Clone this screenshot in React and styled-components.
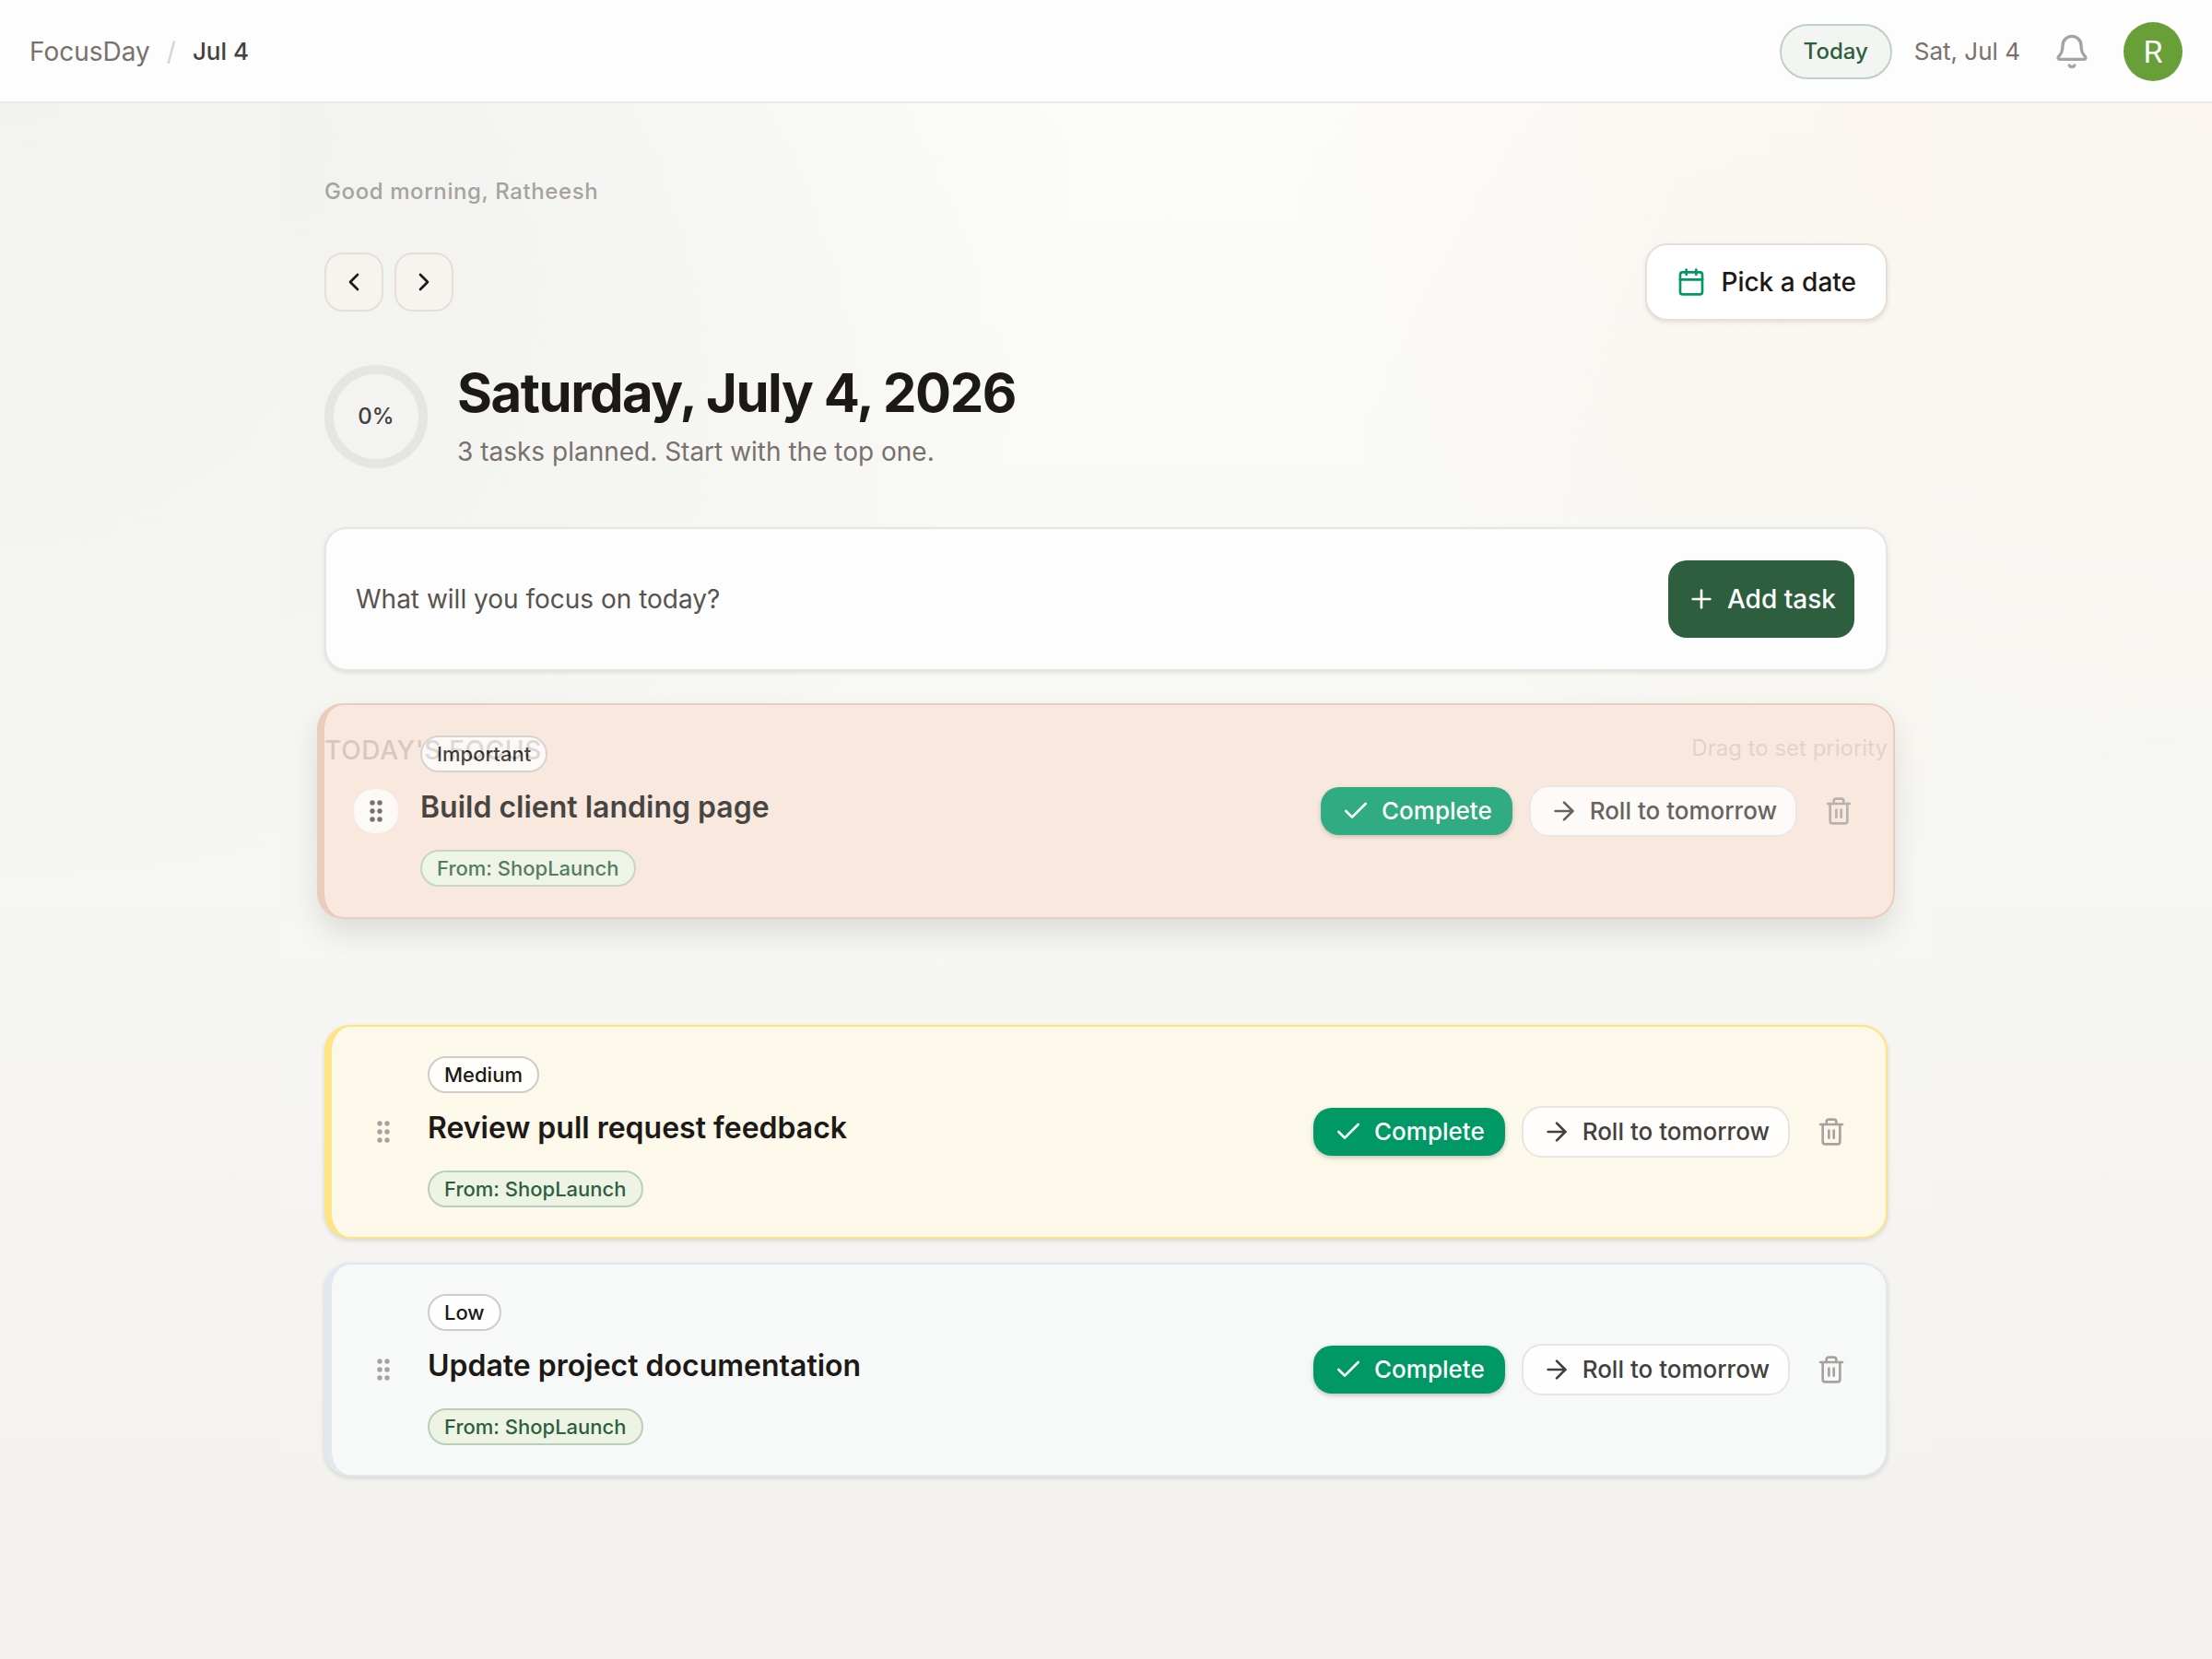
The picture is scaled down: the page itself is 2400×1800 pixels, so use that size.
import React from "react";
import styled, { createGlobalStyle, css } from "styled-components";
import {
  ArrowRight,
  Bell,
  Calendar,
  Check,
  ChevronLeft,
  ChevronRight,
  Plus,
  Trash2,
} from "lucide-react";

const pageBackground = css`
  background:
    radial-gradient(ellipse 50% 55% at 0 0, rgba(45, 75, 63, 0.05), transparent),
    radial-gradient(ellipse 40% 50% at 100% 0, rgba(230, 145, 60, 0.06), transparent),
    linear-gradient(180deg, #fcfcfa 0%, #f7f7f3 45%, #f3f1ed 100%);
`;

const GlobalStyle = createGlobalStyle`
  *, *::before, *::after { box-sizing: border-box; }
  body {
    margin: 0;
    color: #1c1917;
    font-family: Inter, "Liberation Sans", sans-serif;
    font-size: 28px;
    line-height: 40px;
  }
  button, input { font: inherit; color: inherit; }
  h1, h2, h3, p, ul { margin: 0; padding: 0; }
  svg { display: block; flex: none; }
`;

const Page = styled.div`
  display: flex;
  flex-direction: column;
  min-height: 100vh;
  ${pageBackground}
`;

const Header = styled.header`
  display: flex;
  align-items: center;
  justify-content: space-between;
  padding: 24px 32px 22px;
  border-bottom: 2px solid #e9e8e7;
  background: #fdfdfd;
`;

const Breadcrumb = styled.nav`
  display: flex;
  gap: 18px;
  color: #44403c;
  font-weight: 500;
`;

const HomeLink = styled.a`
  color: #78716c;
  font-weight: 400;
  text-decoration: none;
`;

const Slash = styled.span`
  color: #d6d3d1;
  font-weight: 400;
`;

const CurrentDay = styled.span`
  font-size: 26px;
`;

const HeaderTools = styled.div`
  display: flex;
  align-items: center;
  gap: 24px;
`;

const TodayButton = styled.button`
  height: 60px;
  padding: 0 24px;
  border: 2px solid #c0d0c5;
  border-radius: 30px;
  background: #f2f5f2;
  color: #2d5f3f;
  font-size: 24px;
  font-weight: 500;
`;

const HeaderDate = styled.span`
  color: #78716c;
  font-size: 26px;
`;

const BellButton = styled.button`
  padding: 12px;
  border: 0;
  background: none;
  color: #a8a29e;
`;

const Avatar = styled.button`
  width: 64px;
  height: 64px;
  padding: 0;
  border: 0;
  border-radius: 50%;
  background: #689f38;
  color: #fff;
  font-family: Roboto, sans-serif;
  font-size: 34px;
`;

const Main = styled.main`
  flex: 1;
  width: 100%;
  max-width: 1792px;
  margin: 0 auto;
  padding: 80px 48px;
  ${pageBackground}
`;

const Greeting = styled.p`
  color: #a8a29e;
  font-size: 24px;
  font-weight: 500;
  line-height: 32px;
  letter-spacing: 0.025em;
`;

const DayNav = styled.div`
  display: flex;
  align-items: center;
  gap: 12px;
  margin-top: 40px;
`;

const StepButton = styled.button`
  display: grid;
  place-items: center;
  width: 64px;
  height: 64px;
  padding: 0;
  border: 2px solid #e7dfd6;
  border-radius: 20px;
  background: #f7f4f0;
`;

const PickButton = styled.button`
  display: flex;
  align-items: center;
  gap: 16px;
  height: 84px;
  margin-left: auto;
  padding: 0 32px;
  border: 2px solid #e7dfd6;
  border-radius: 24px;
  background: #fff;
  font-weight: 500;
  box-shadow: 0 2px 4px rgba(28, 25, 23, 0.1);

  svg { color: #009966; }
`;

const Hero = styled.section`
  display: flex;
  align-items: center;
  gap: 32px;
  margin-top: 42px;
`;

const Ring = styled.div`
  display: grid;
  place-items: center;
  width: 112px;
  height: 112px;
  border: 10px solid #e7e5e4;
  border-radius: 50%;
  color: #44403c;
  font-size: 24px;
  font-weight: 500;
`;

const HeroText = styled.div`
  display: grid;
  gap: 8px;
  padding-bottom: 4px;
`;

const Title = styled.h1`
  font-size: 58px;
  font-weight: 700;
  line-height: 72px;
  letter-spacing: -0.025em;
`;

const Subtitle = styled.p`
  color: #78716c;
`;

const AddForm = styled.form`
  display: flex;
  align-items: center;
  gap: 24px;
  margin-top: 58px;
  padding: 34px 34px 34px 32px;
  border: 2px solid #e7e5e4;
  border-radius: 24px;
  background: #fdfdfd;
  box-shadow: 0 2px 4px rgba(28, 25, 23, 0.1);
`;

const TaskInput = styled.input`
  flex: 1;
  min-width: 0;
  height: 84px;
  padding: 0;
  border: 0;
  outline: 0;
  background: none;

  &::placeholder { color: #57534e; opacity: 1; }
`;

const AddButton = styled.button`
  display: flex;
  align-items: center;
  gap: 12px;
  height: 84px;
  padding: 0 20px;
  border: 0;
  border-radius: 20px;
  background: #2d5f3f;
  color: #fff;
  font-weight: 500;
`;

const SectionHead = styled.div`
  display: flex;
  align-items: flex-start;
  justify-content: space-between;
  margin-top: 66px;
`;

const SectionTitle = styled.h2`
  color: #57534e;
  font-size: 28px;
  font-weight: 500;
  letter-spacing: 0.025em;
`;

const Hint = styled.p`
  color: #8c857f;
  font-size: 24px;
  line-height: 36px;
`;

const TaskList = styled.ul`
  display: grid;
  gap: 26px;
  margin-top: 20px;
  list-style: none;
`;

const tones = {
  Important: { line: "#e8c3b0", fill: "#fae5da" },
  Medium: { line: "#fde585", fill: "#fcf8ea" },
  Low: { line: "#e2e8f0", fill: "#f7f9f8" },
};

const TaskCard = styled.li`
  display: flex;
  align-items: center;
  gap: 24px;
  padding: 32px;
  border: 2px solid ${(p) => tones[p.$tone].line};
  border-left-width: 8px;
  border-radius: 28px;
  background: ${(p) => tones[p.$tone].fill};
  box-shadow: 0 2px 5px rgba(28, 25, 23, 0.14);

  ${(p) =>
    p.$dragging &&
    css`
      z-index: 1;
      margin: -1px -8px;
      padding: 33px 32px;
      opacity: 0.8;
      transform: translateY(-90px);
      box-shadow: 0 16px 32px -4px rgba(28, 25, 23, 0.16);
    `}
`;

const Handle = styled.button`
  display: grid;
  place-items: center;
  width: 48px;
  height: 48px;
  padding: 0;
  border: 0;
  border-radius: 22px;
  background: ${(p) => (p.$active ? "rgba(255, 255, 255, 0.8)" : "transparent")};
  color: ${(p) => (p.$active ? "#57534e" : "#a8a29e")};
`;

const TaskBody = styled.div`
  flex: 1;
  display: flex;
  flex-direction: column;
  align-items: flex-start;
`;

const Tag = styled.span`
  padding: 0 16px;
  border: 2px solid ${(p) => (p.$source ? "#b9cfbb" : "#cfcccb")};
  border-radius: 20px;
  background: ${(p) => (p.$source ? "#edf4e4" : "rgba(255, 255, 255, 0.8)")};
  color: ${(p) => (p.$source ? "#2d5f3f" : "#1c1917")};
  font-size: 22px;
  font-weight: 500;
  line-height: 36px;
`;

const TaskTitle = styled.h3`
  margin: 14px 0 22px;
  font-size: 32px;
  font-weight: 600;
  line-height: 48px;
`;

const Actions = styled.div`
  display: flex;
  align-items: center;
  gap: 18px;
`;

const ActionButton = styled.button`
  display: flex;
  align-items: center;
  gap: 12px;
  height: 56px;
  padding: 0 20px;
  border: 2px solid #e7e5e4;
  border-radius: 22px;
  background: rgba(255, 255, 255, 0.85);
  color: #44403c;
  font-size: 26px;
  font-weight: 500;

  ${(p) =>
    p.$primary &&
    css`
      height: 52px;
      padding: 0 22px;
      border: 0;
      border-radius: 20px;
      background: #009966;
      color: #fff;
      box-shadow: 0 2px 5px rgba(28, 25, 23, 0.25);
    `}
`;

const DeleteButton = styled.button`
  padding: 11px;
  border: 0;
  background: none;
  color: #a8a29e;
`;

function Grip() {
  return (
    <svg width="16" height="26" viewBox="0 0 16 26" fill="currentColor" aria-hidden="true">
      {[4, 13, 22].map((y) => (
        <React.Fragment key={y}>
          <circle cx="4" cy={y} r="2.7" />
          <circle cx="12" cy={y} r="2.7" />
        </React.Fragment>
      ))}
    </svg>
  );
}

const tasks = [
  { title: "Build client landing page", tone: "Important", dragging: true },
  { title: "Review pull request feedback", tone: "Medium" },
  { title: "Update project documentation", tone: "Low" },
];

function Task({ title, tone, dragging }) {
  return (
    <TaskCard $tone={tone} $dragging={dragging}>
      <Handle type="button" $active={dragging} aria-label={`Move ${title}`}>
        <Grip />
      </Handle>
      <TaskBody>
        <Tag>{tone}</Tag>
        <TaskTitle>{title}</TaskTitle>
        <Tag $source>From: ShopLaunch</Tag>
      </TaskBody>
      <Actions>
        <ActionButton type="button" $primary>
          <Check size={32} />
          Complete
        </ActionButton>
        <ActionButton type="button">
          <ArrowRight size={32} />
          Roll to tomorrow
        </ActionButton>
        <DeleteButton type="button" aria-label={`Delete ${title}`}>
          <Trash2 size={32} />
        </DeleteButton>
      </Actions>
    </TaskCard>
  );
}

export default function App() {
  return (
    <Page>
      <GlobalStyle />
      <Header>
        <Breadcrumb aria-label="Breadcrumb">
          <HomeLink href="#home">FocusDay</HomeLink>
          <Slash>/</Slash>
          <CurrentDay>Jul 4</CurrentDay>
        </Breadcrumb>
        <HeaderTools>
          <TodayButton type="button">Today</TodayButton>
          <HeaderDate>Sat, Jul 4</HeaderDate>
          <BellButton type="button" aria-label="Notifications">
            <Bell size={40} />
          </BellButton>
          <Avatar type="button">R</Avatar>
        </HeaderTools>
      </Header>
      <Main>
        <Greeting>Good morning, Ratheesh</Greeting>
        <DayNav>
          <StepButton type="button" aria-label="Previous day">
            <ChevronLeft size={32} />
          </StepButton>
          <StepButton type="button" aria-label="Next day">
            <ChevronRight size={32} />
          </StepButton>
          <PickButton type="button">
            <Calendar size={32} />
            Pick a date
          </PickButton>
        </DayNav>
        <Hero>
          <Ring>0%</Ring>
          <HeroText>
            <Title>Saturday, July 4, 2026</Title>
            <Subtitle>3 tasks planned. Start with the top one.</Subtitle>
          </HeroText>
        </Hero>
        <AddForm onSubmit={(e) => e.preventDefault()}>
          <TaskInput aria-label="New task" placeholder="What will you focus on today?" />
          <AddButton type="submit">
            <Plus size={32} />
            Add task
          </AddButton>
        </AddForm>
        <SectionHead>
          <SectionTitle>TODAY'S FOCUS</SectionTitle>
          <Hint>Drag to set priority</Hint>
        </SectionHead>
        <TaskList>
          {tasks.map((task) => (
            <Task key={task.title} {...task} />
          ))}
        </TaskList>
      </Main>
    </Page>
  );
}
